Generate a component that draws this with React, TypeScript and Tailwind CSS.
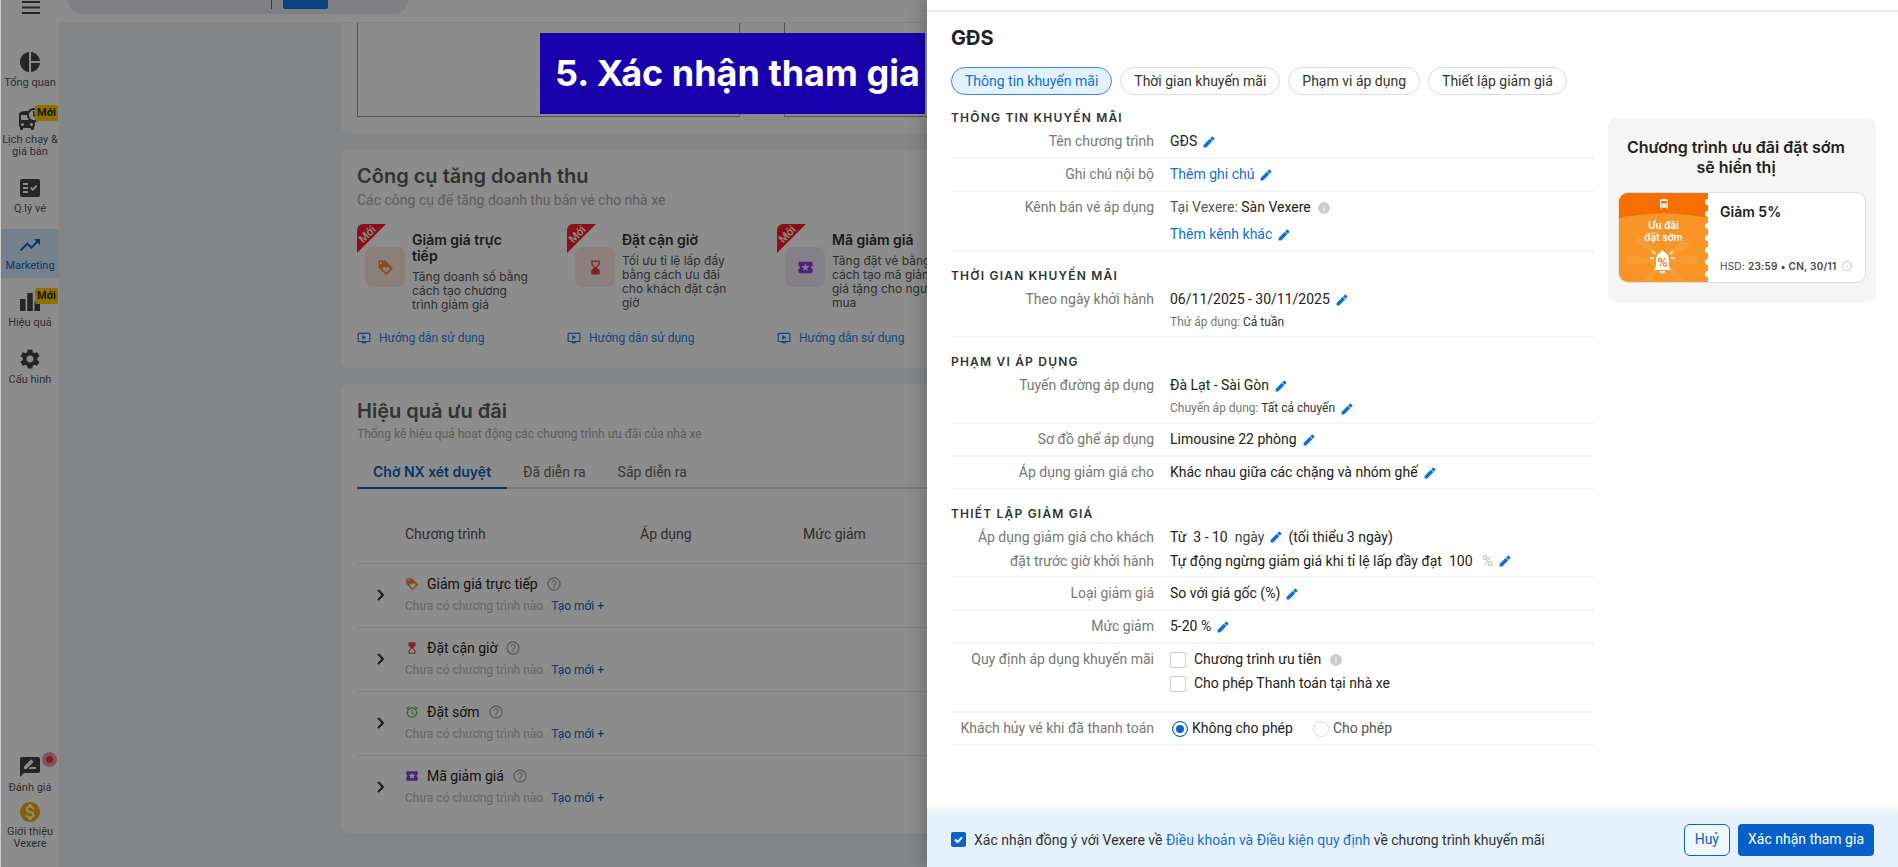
import React from 'react';
import type { ReactNode } from 'react';
import type { IconType } from 'react-icons';
import {
  MdPieChart,
  MdDepartureBoard,
  MdFactCheck,
  MdTrendingUp,
  MdLeaderboard,
  MdSettings,
  MdRateReview,
  MdMonetizationOn,
  MdLoyalty,
  MdHourglassTop,
  MdHourglassBottom,
  MdLocalActivity,
  MdAlarm,
  MdOutlineOndemandVideo,
  MdHelpOutline,
  MdInfo,
  MdInfoOutline,
  MdDirectionsBus,
} from 'react-icons/md';

const MENU: { label: string; icon: IconType; isNew?: boolean; active?: boolean }[] = [
  { label: 'Tổng quan', icon: MdPieChart },
  { label: 'Lịch chạy & giá bán', icon: MdDepartureBoard, isNew: true },
  { label: 'Q.lý vé', icon: MdFactCheck },
  { label: 'Marketing', icon: MdTrendingUp, active: true },
  { label: 'Hiệu quả', icon: MdLeaderboard, isNew: true },
  { label: 'Cấu hình', icon: MdSettings },
];

const TOOLS = [
  {
    title: 'Giảm giá trực tiếp',
    text: 'Tăng doanh số bằng cách tạo chương trình giảm giá',
    icon: MdLoyalty,
    tone: 'bg-[#fde8dc] text-[#f58a3c]',
  },
  {
    title: 'Đặt cận giờ',
    text: 'Tối ưu tỉ lệ lấp đầy bằng cách ưu đãi cho khách đặt cận giờ',
    icon: MdHourglassBottom,
    tone: 'bg-[#fdeae6] text-[#e8404a]',
  },
  {
    title: 'Mã giảm giá',
    text: 'Tăng đặt vé bằng cách tạo mã giảm giá tặng cho người mua',
    icon: MdLocalActivity,
    tone: 'bg-[#efe9f8] text-[#8a3fe0]',
  },
];

const PROGRAMS = [
  { title: 'Giảm giá trực tiếp', icon: MdLoyalty, tone: 'text-[#f58a3c]' },
  { title: 'Đặt cận giờ', icon: MdHourglassTop, tone: 'text-[#e8404a]' },
  { title: 'Đặt sớm', icon: MdAlarm, tone: 'text-[#62b545]' },
  { title: 'Mã giảm giá', icon: MdLocalActivity, tone: 'text-[#8a3fe0]' },
];

const CHIPS = ['Thông tin khuyến mãi', 'Thời gian khuyến mãi', 'Phạm vi áp dụng', 'Thiết lập giảm giá'];

function NewBadge() {
  return (
    <span className="absolute top-[2px] right-[1px] rounded-xs bg-[#ffcd00] px-[2px] text-[11px] leading-4 font-bold text-[#333]">
      Mới
    </span>
  );
}

function Sidebar() {
  return (
    <nav className="flex w-[59px] shrink-0 flex-col border-l border-l-[#ccc] bg-white text-[#555]">
      <button aria-label="Menu" className="flex h-[46px] justify-center pl-px">
        <svg width="18" height="14" viewBox="0 0 18 14" fill="none" stroke="#444" strokeWidth="2">
          <path d="M0 2h18M0 7.500h18M0 13h18" />
        </svg>
      </button>
      <div className="flex flex-col gap-2">
        {MENU.map(({ label, icon: Icon, isNew, active }) => (
          <a
            key={label}
            href="#"
            className={
              'relative flex flex-col items-center px-px pt-1 pb-[6px] text-center text-[11px] leading-3 ' +
              (active ? 'bg-[#d6ecff] text-[#0d63c0]' : '')
            }
          >
            <Icon className={'mb-[3px] size-6 ' + (active ? 'text-[#0d63c0]' : 'text-[#444]')} />
            {label}
            {isNew && <NewBadge />}
          </a>
        ))}
      </div>
      <div className="mt-auto flex flex-col gap-[6px] pb-[17px] text-center text-[11px] leading-3">
        <a href="#" className="relative flex flex-col items-center">
          <MdRateReview className="mb-[3px] size-6 text-[#444]" />
          Đánh giá
          <span className="absolute -top-[3px] right-[2px] flex size-[15px] items-center justify-center rounded-full bg-[#f49a9e]">
            <span className="size-[7px] rounded-full bg-[#f0323c]" />
          </span>
        </a>
        <a href="#" className="flex flex-col items-center">
          <MdMonetizationOn className="mb-[2px] size-6 text-[#efb000]" />
          Giới thiệu Vexere
        </a>
      </div>
    </nav>
  );
}

function TopBar() {
  return (
    <header className="h-[23px] shrink-0 border-b border-[#f0f0f0] bg-white pl-[9px]">
      <div className="flex h-[14px] w-[340px] items-start rounded-b-[20px] bg-[#e6e9f0] pl-[203px]">
        <span className="h-[9px] w-px bg-[#1a73e8]" />
        <span className="ml-[11px] h-[9px] w-[45px] rounded-b-xs bg-[#1078e8]" />
      </div>
    </header>
  );
}

function Ribbon() {
  return (
    <span className="absolute top-0 left-0 flex size-[29px] items-center justify-center text-white">
      <svg className="absolute inset-0" width="29" height="29" viewBox="0 0 29 29">
        <path d="M0 6a6 6 0 0 1 6-6h23L0 29z" fill="#fb1c2c" />
      </svg>
      <span className="relative mr-2 mb-2 -rotate-45 text-[11px] leading-none font-medium">Mới</span>
    </span>
  );
}

function ToolsCard() {
  return (
    <section className="rounded-lg bg-white px-4 pt-[14px] pb-5">
      <h2 className="font-['Inter'] text-[20px] leading-[26px] font-semibold text-[#5c5c5c]">Công cụ tăng doanh thu</h2>
      <p className="text-[14px] leading-[22px] text-[#aaa]">Các công cụ để tăng doanh thu bán vé cho nhà xe</p>
      <div className="mt-[13px] flex">
        {TOOLS.map(({ title, text, icon: Icon, tone }) => (
          <article key={title} className="relative w-[210px] shrink-0">
            <Ribbon />
            <div className="flex h-[104px] gap-[7px] pt-2 pl-2">
              <span className={'mt-[15px] flex size-10 shrink-0 items-center justify-center rounded-lg ' + tone}>
                <Icon className="size-[17px]" />
              </span>
              <div className="w-[116px]">
                <h3 className="pr-4 font-['Inter'] text-[14px] leading-4 font-semibold text-[#333]">{title}</h3>
                <p className="mt-[6px] font-['Inter'] text-[12px] leading-[14px] text-[#555]">{text}</p>
              </div>
            </div>
            <a href="#" className="flex items-center gap-2 text-[12px] leading-5 text-[#2a7de1]">
              <MdOutlineOndemandVideo className="size-[14px]" />
              Hướng dẫn sử dụng
            </a>
          </article>
        ))}
      </div>
    </section>
  );
}

function ResultsCard() {
  return (
    <section className="min-h-0 rounded-lg bg-white px-4 pt-[14px] pb-[14px]">
      <h2 className="font-['Inter'] text-[20px] leading-[26px] font-semibold text-[#5c5c5c]">Hiệu quả ưu đãi</h2>
      <p className="text-[12px] leading-[20px] text-[#aaa]">
        Thống kê hiệu quả hoạt động các chương trình ưu đãi của nhà xe
      </p>
      <div role="tablist" className="mt-[13px] flex border-b-2 border-[#d8dae0] text-[14px] leading-[30px] text-[#666]">
        <button role="tab" aria-selected="true" className="-mb-[2px] border-b-2 border-[#0d63c0] px-4 font-['Inter'] font-semibold text-[#0d63c0]">
          Chờ NX xét duyệt
        </button>
        <button role="tab" className="px-4">Đã diễn ra</button>
        <button role="tab" className="px-4">Sắp diễn ra</button>
      </div>
      <table className="mt-[18px] w-full table-fixed text-left text-[14px]">
        <thead>
          <tr className="h-[56px] border-b border-[#ebebeb] text-[#555]">
            <th className="w-12" aria-label="Mở rộng" />
            <th className="w-[235px] font-normal">Chương trình</th>
            <th className="w-[163px] font-normal">Áp dụng</th>
            <th className="font-normal">Mức giảm</th>
          </tr>
        </thead>
        <tbody>
          {PROGRAMS.map(({ title, icon: Icon, tone }) => (
            <tr key={title} className="h-16 border-b border-[#ebebeb] last:border-0">
              <td className="pl-[19px]">
                <button aria-label={'Mở ' + title} className="block">
                  <svg width="10" height="14" viewBox="0 0 10 14" fill="none" stroke="#333" strokeWidth="2">
                    <path d="M2 2l5 5-5 5" />
                  </svg>
                </button>
              </td>
              <td colSpan={3}>
                <div className="flex items-center leading-5 text-[#222]">
                  <Icon className={'mr-2 size-[14px] ' + tone} />
                  {title}
                  <MdHelpOutline className="ml-2 size-4 text-[#aaa]" />
                </div>
                <div className="mt-[2px] flex gap-2 text-[12px] leading-5 text-[#bbb]">
                  Chưa có chương trình nào
                  <a href="#" className="text-[#1565c0]">Tạo mới +</a>
                </div>
              </td>
            </tr>
          ))}
        </tbody>
      </table>
    </section>
  );
}

function Pencil() {
  return (
    <button aria-label="Chỉnh sửa" className="shrink-0 text-[#0b6fdc]">
      <svg width="12" height="12" viewBox="0 0 12 12" fill="currentColor">
        <path d="M.6 11.400V8.900L6.800 2.700l2.500 2.500-6.200 6.200zM7.200 2.300L8.600.9a1.100 1.100 0 0 1 1.500 0l1 1a1.100 1.100 0 0 1 0 1.500L9.700 4.800z" />
      </svg>
    </button>
  );
}

function Section({ title, children }: { title: string; children: ReactNode }) {
  return (
    <section className="mb-4">
      <h3 className="font-['Inter'] text-[12px] leading-4 font-semibold tracking-widest text-[#333] uppercase">{title}</h3>
      {children}
    </section>
  );
}

function Row({ label, children, tall }: { label: ReactNode; children: ReactNode; tall?: boolean }) {
  return (
    <div
      className={
        'flex gap-4 border-b-2 border-[#f5f5f5] text-[14px] ' + (tall ? 'py-[3px] leading-6' : 'py-[5px] leading-[21px]')
      }
    >
      <div className="w-[203px] shrink-0 text-right text-[#777]">{label}</div>
      <div className="min-w-0 flex-1 text-[#222]">{children}</div>
    </div>
  );
}

function Line({ children }: { children: ReactNode }) {
  return <div className="flex items-center gap-[6px]">{children}</div>;
}

function SubLine({ children }: { children: ReactNode }) {
  return <div className="mt-1 flex items-center gap-[6px] text-[12px] leading-[17px] text-[#777]">{children}</div>;
}

function Ticket() {
  return (
    <aside className="mt-[106px] h-[184px] w-[268px] shrink-0 rounded-lg bg-[#f5f5f5] px-[10px] pt-[19px] font-['Inter']">
      <h3 className="pr-3 text-center text-[16px] leading-5 font-semibold text-[#222]">
        Chương trình ưu đãi đặt sớm sẽ hiển thị
      </h3>
      <div className="mt-[15px] flex h-[91px] overflow-hidden rounded-[10px] border border-[#e0e0e0] bg-white">
        <div className="relative w-[89px] shrink-0 bg-[#f99526]">
          <svg className="absolute inset-0" width="89" height="89" viewBox="0 0 89 89" fill="none">
            <path d="M0 0h89v25Q44 16 0 25z" fill="#f76f00" />
            <path
              d="M44 68L16 48l7-6zM44 68L64 46l8 7zM44 68L8 62v10zM44 68l34-6v10zM44 68L22 88h10zM44 68l12 20h11z"
              fill="#fa9c35"
            />
            <g fill="#fff">
              <circle cx="89" cy="9" r="3" />
              <circle cx="89" cy="21" r="3" />
              <circle cx="89" cy="33" r="3" />
              <circle cx="89" cy="45" r="3" />
              <circle cx="89" cy="57" r="3" />
              <circle cx="89" cy="69" r="3" />
              <circle cx="89" cy="81" r="3" />
              <path d="M35 77c2-2 2-5 2-9 0-5 2-8 5-9a1.500 1.500 0 0 1 3 0c3 1 5 4 5 9 0 4 0 7 2 9zM41 78h5a2.500 2.500 0 0 1-5 0z" />
            </g>
            <path d="M33 58l3 3M31 65h4M54 58l-3 3M56 65h-4" stroke="#fff" strokeWidth="1.500" />
            <g stroke="#f7821a" strokeWidth="1.200">
              <path d="M41 73l5-8" />
              <circle cx="41" cy="67" r="1.600" />
              <circle cx="46" cy="71.500" r="1.600" />
            </g>
          </svg>
          <div className="relative flex flex-col items-center pt-[5px] text-center text-[10px] leading-3 font-semibold text-white">
            <MdDirectionsBus className="mb-[9px] size-3" />
            Ưu đãi
            <br />
            đặt sớm
          </div>
        </div>
        <div className="flex flex-1 flex-col justify-between pt-[9px] pr-3 pb-2 pl-3">
          <strong className="text-[14px] leading-5 font-semibold text-[#222]">Giảm 5%</strong>
          <div className="flex items-center justify-between text-[10px] leading-4 tracking-wide whitespace-nowrap text-[#444]">
            <span>
              HSD: <b className="font-semibold">23:59 • CN, 30/11</b>
            </span>
            <MdInfoOutline className="size-3 text-[#ccc]" />
          </div>
        </div>
      </div>
    </aside>
  );
}

function Drawer() {
  return (
    <div
      role="dialog"
      aria-label="GĐS"
      className="absolute inset-y-0 right-0 flex w-[971px] max-w-full flex-col bg-white shadow-[-4px_0_14px_rgba(0,0,0,0.2)]"
    >
      <div className="h-3 shrink-0 border-b-2 border-[#ebebeb]" />
      <div className="flex min-h-0 flex-1 gap-[14px] overflow-hidden pr-[22px] pl-6">
        <div className="min-w-0 flex-1 pt-[13px]">
          <h2 className="font-['Inter'] text-[20px] leading-[26px] font-bold text-[#222]">GĐS</h2>
          <div className="mt-4 mb-[15px] flex gap-2">
            {CHIPS.map((chip, i) => (
              <button
                key={chip}
                className={
                  'h-7 rounded-full border px-[13px] text-[14px] leading-[26px] whitespace-nowrap ' +
                  (i === 0 ? 'border-[#3b8ae0] bg-[#e3f1fc] text-[#1070d8]' : 'border-[#ddd] bg-white text-[#333]')
                }
              >
                {chip}
              </button>
            ))}
          </div>
          <Section title="Thông tin khuyến mãi">
            <Row label="Tên chương trình">
              <Line>GĐS <Pencil /></Line>
            </Row>
            <Row label="Ghi chú nội bộ">
              <Line><a href="#" className="text-[#0b6fdc]">Thêm ghi chú</a> <Pencil /></Line>
            </Row>
            <Row label="Kênh bán vé áp dụng">
              <Line>
                <span className="text-[#555]">Tại Vexere: <span className="text-[#222]">Sàn Vexere</span></span>
                <MdInfo className="size-[14px] text-[#ccc]" />
              </Line>
              <div className="mt-[6px]">
                <Line><a href="#" className="text-[#0b6fdc]">Thêm kênh khác</a> <Pencil /></Line>
              </div>
            </Row>
          </Section>
          <Section title="Thời gian khuyến mãi">
            <Row label="Theo ngày khởi hành">
              <Line>06/11/2025 - 30/11/2025 <Pencil /></Line>
              <SubLine>
                <span>Thứ áp dụng: <span className="text-[#333]">Cả tuần</span></span>
              </SubLine>
            </Row>
          </Section>
          <Section title="Phạm vi áp dụng">
            <Row label="Tuyến đường áp dụng">
              <Line>Đà Lạt - Sài Gòn <Pencil /></Line>
              <SubLine>
                <span>Chuyến áp dụng: <span className="text-[#333]">Tất cả chuyến</span></span>
                <Pencil />
              </SubLine>
            </Row>
            <Row label="Sơ đồ ghế áp dụng">
              <Line>Limousine 22 phòng <Pencil /></Line>
            </Row>
            <Row label="Áp dụng giảm giá cho">
              <Line>Khác nhau giữa các chặng và nhóm ghế <Pencil /></Line>
            </Row>
          </Section>
          <Section title="Thiết lập giảm giá">
            <Row tall label={<>Áp dụng giảm giá cho khách<br />đặt trước giờ khởi hành</>}>
              <Line>
                <span>Từ&nbsp; 3 - 10 &nbsp;<span className="text-[#444]">ngày</span></span> <Pencil /> (tối thiểu 3 ngày)
              </Line>
              <Line>
                Tự động ngừng giảm giá khi tỉ lệ lấp đầy đạt &nbsp;100 <span className="ml-1 text-[#bbb]">%</span> <Pencil />
              </Line>
            </Row>
            <Row label="Loại giảm giá">
              <Line>So với giá gốc (%) <Pencil /></Line>
            </Row>
            <Row label="Mức giảm">
              <Line>5-20 % <Pencil /></Line>
            </Row>
            <Row label="Quy định áp dụng khuyến mãi">
              <div className="flex flex-col gap-[3px] pb-3">
                <div className="flex items-center gap-2">
                  <label className="flex items-center gap-2">
                    <input type="checkbox" className="size-4 appearance-none rounded-xs border border-[#ccc]" />
                    Chương trình ưu tiên
                  </label>
                  <MdInfo className="size-[14px] text-[#ccc]" />
                </div>
                <label className="flex items-center gap-2">
                  <input type="checkbox" className="size-4 appearance-none rounded-xs border border-[#ccc]" />
                  Cho phép Thanh toán tại nhà xe
                </label>
              </div>
            </Row>
            <Row label="Khách hủy vé khi đã thanh toán">
              <div className="flex gap-5 pl-[2px]">
                <label className="flex items-center gap-1">
                  <input
                    type="radio"
                    name="refund"
                    defaultChecked
                    className="size-4 appearance-none rounded-full border border-[#0b62cc] bg-[#0b62cc] shadow-[inset_0_0_0_3px_white]"
                  />
                  Không cho phép
                </label>
                <label className="flex items-center gap-1 text-[#555]">
                  <input type="radio" name="refund" className="size-4 appearance-none rounded-full border border-[#ddd]" />
                  Cho phép
                </label>
              </div>
            </Row>
          </Section>
        </div>
        <div>
          <Ticket />
        </div>
      </div>
      <div className="h-[10px] shrink-0 bg-linear-to-b from-white to-[#f3f3f3]" />
      <footer className="flex h-[55px] shrink-0 items-center bg-[#e5f1fb] pr-6 pl-6">
        <label className="flex flex-1 items-center gap-2 text-[14px] leading-5 text-[#333]">
          <span className="relative flex size-[15px]">
            <input type="checkbox" defaultChecked className="size-[15px] appearance-none rounded-xs bg-[#0b62c4]" />
            <svg className="pointer-events-none absolute inset-0" width="15" height="15" viewBox="0 0 15 15" fill="none" stroke="#fff" strokeWidth="2">
              <path d="M4 7.500l2.500 2.500L11 5.500" />
            </svg>
          </span>
          <span>
            Xác nhận đồng ý với Vexere về <a href="#" className="text-[#1a6fd4]">Điều khoản và Điều kiện quy định</a> về chương trình khuyến mãi
          </span>
        </label>
        <div className="flex gap-2 text-[14px]">
          <button className="h-8 rounded-md border border-[#0b62c4] bg-[#eff7fd] px-[10px] text-[#0b62c4]">Huỷ</button>
          <button className="h-8 rounded-sm bg-[#0560c8] px-[10px] text-white">Xác nhận tham gia</button>
        </div>
      </footer>
    </div>
  );
}

export default function App() {
  return (
    <div className="relative flex h-screen overflow-hidden bg-[#f1f3f6] font-['Roboto','Liberation_Sans',sans-serif]">
      <Sidebar />
      <div className="flex min-w-0 flex-1 flex-col">
        <TopBar />
        <main className="flex flex-1 flex-col gap-4 pl-[282px]">
          <section className="flex h-[110px] shrink-0 gap-11 rounded-b-lg bg-white px-4 pb-4">
            <div className="w-[383px] shrink-0 border border-t-0 border-[#999]" />
            <div className="flex-1 border border-t-0 border-[#999]" />
          </section>
          <ToolsCard />
          <ResultsCard />
        </main>
      </div>
      <div className="absolute inset-y-0 right-0 left-px bg-black/45" />
      <div className="absolute top-[33px] right-[973px] flex h-[81px] w-[385px] items-center bg-[#1a00ad] pb-[2px] pl-[15px] font-['Inter'] text-[36px] font-bold whitespace-nowrap text-white">
        5. Xác nhận tham gia
      </div>
      <Drawer />
    </div>
  );
}
